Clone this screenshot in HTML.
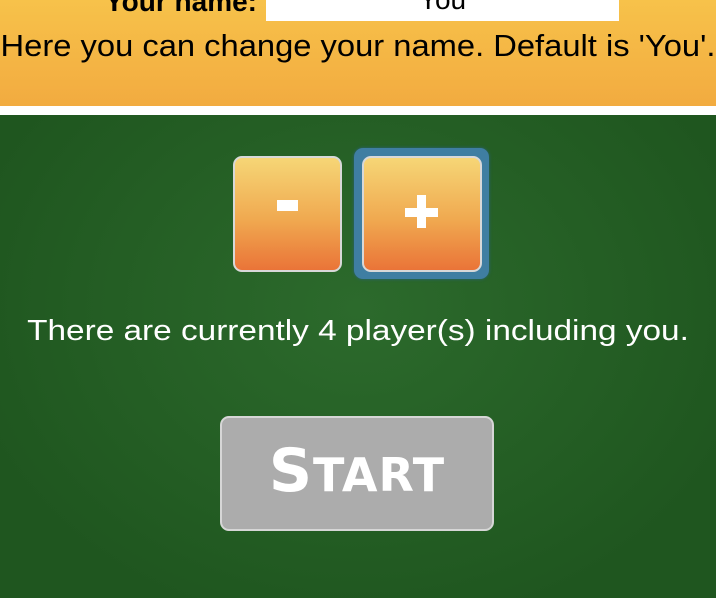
<!DOCTYPE html>
<html><head><style>
html,body{margin:0;padding:0;width:716px;height:598px;overflow:hidden;font-family:"Liberation Sans",sans-serif}
.top{position:absolute;left:0;top:0;width:716px;height:106px;background:linear-gradient(#f7c24a,#f2ab40)}
.gap{position:absolute;left:0;top:106px;width:716px;height:9px;background:#fff}
.green{position:absolute;left:0;top:115px;width:716px;height:483px;background:radial-gradient(ellipse at 50% 40%,#2c6a2c,#1f561f 80%)}
.lbl{position:absolute;right:459px;top:-14px;font-weight:bold;font-size:28px;color:#000}
.inp{position:absolute;left:266px;top:0;width:353px;height:21px;background:#fff;text-align:center;font-size:28px;line-height:0;overflow:hidden}
.help{position:absolute;left:0;width:716px;top:28px;text-align:center;font-size:31px;color:#000;white-space:nowrap;transform:scaleX(1.055)}
.btn{position:absolute;border:2px solid #d8d8d8;border-radius:9px;background:linear-gradient(#f6d676,#f0a950 55%,#ea7438);box-sizing:border-box}
.w{position:absolute;background:#fff}
.ring{position:absolute;left:354px;top:148px;width:135px;height:131px;border-radius:9px;background:#3f7ea2;box-shadow:0 0 3px #2a5f80}
.msg{position:absolute;left:0;width:716px;top:315px;text-align:center;color:#fff;font-size:29px;white-space:nowrap;transform:scaleX(1.15)}
.start{position:absolute;left:220px;top:416px;width:274px;height:115px;border:2px solid #d6d6d6;border-radius:9px;background:#acacac;box-sizing:border-box;color:#fff;font-weight:bold;font-size:60px;text-align:center;line-height:106px;font-family:"DejaVu Sans",sans-serif;letter-spacing:1px}
.start small{font-size:46px}
</style></head><body>
<div class="top">
<div class="lbl">Your name:</div>
<div class="inp">You</div>
<div class="help">Here you can change your name. Default is 'You'.</div>
</div>
<div class="gap"></div>
<div class="green"></div>
<div class="btn" style="left:233px;top:156px;width:109px;height:116px"></div>
<div class="w" style="left:277px;top:200px;width:21px;height:11px"></div>
<div class="ring"></div>
<div class="btn" style="left:362px;top:156px;width:120px;height:116px"></div>
<div class="w" style="left:405px;top:208px;width:33px;height:9px"></div>
<div class="w" style="left:417px;top:195px;width:9px;height:33px"></div>
<div class="msg">There are currently 4 player(s) including you.</div>
<div class="start">S<small>TART</small></div>
</body></html>
